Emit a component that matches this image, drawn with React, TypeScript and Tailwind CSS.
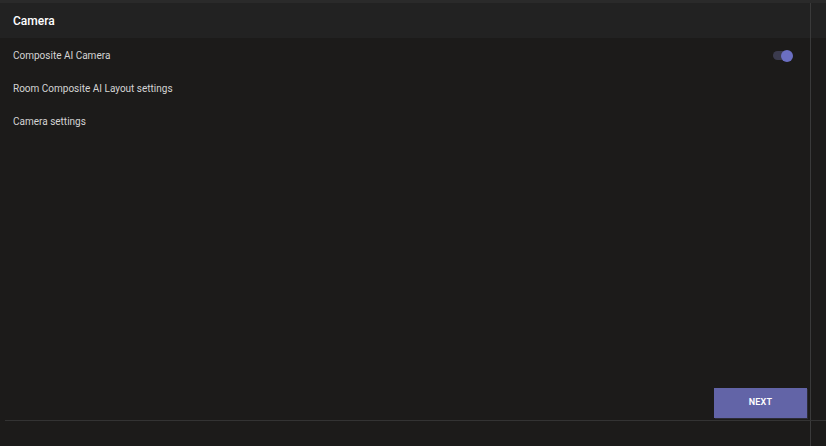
export default function App() {
  return (
    <div className="w-[826px] h-[446px] bg-[#1c1b1a] flex flex-col font-['Roboto',sans-serif] text-[#d4d4d4] overflow-hidden">
      <header className="h-[38px] shrink-0 bg-[#222222] border-t-[3px] border-[#2a2a2a] flex">
        <div className="w-[811px] flex items-center px-[13px] border-r border-[#3a3a3a]">
          <h1 className="text-[12px] font-medium text-white">Camera</h1>
        </div>
      </header>
      <div className="flex flex-1 min-h-0">
        <div className="w-[811px] flex flex-col border-r border-[#3a3a3a]">
          <ul className="flex flex-col pt-[1px]">
            <li className="h-[33px] flex items-center justify-between pl-[13px] pr-[17px] text-[10px]">
              <span>Composite AI Camera</span>
              <Toggle />
            </li>
            <li className="h-[33px] flex items-center pl-[13px] text-[10px]">Room Composite AI Layout settings</li>
            <li className="h-[33px] flex items-center pl-[13px] text-[10px]">Camera settings</li>
          </ul>
          <div className="flex-1" />
          <div className="flex justify-end pr-[3px] pb-[2px]">
            <button className="w-[93px] h-[30px] bg-[#6264a7] text-white text-[9px] font-semibold tracking-wide shadow-[1px_1px_0_#2c2c36]">
              NEXT
            </button>
          </div>
        </div>
      </div>
      <div className="h-[26px] shrink-0 flex border-t border-[#333333] ml-[5px]">
        <div className="w-[806px] border-r border-[#3a3a3a]" />
      </div>
    </div>
  );
}

function Toggle() {
  return (
    <div className="relative w-[20px] h-[12px] flex items-center">
      <div className="w-[18px] h-[9px] rounded-full bg-[#3b3b4e]" />
      <div className="absolute right-0 w-[12px] h-[12px] rounded-full bg-[#6b6fc2]" />
    </div>
  );
}
